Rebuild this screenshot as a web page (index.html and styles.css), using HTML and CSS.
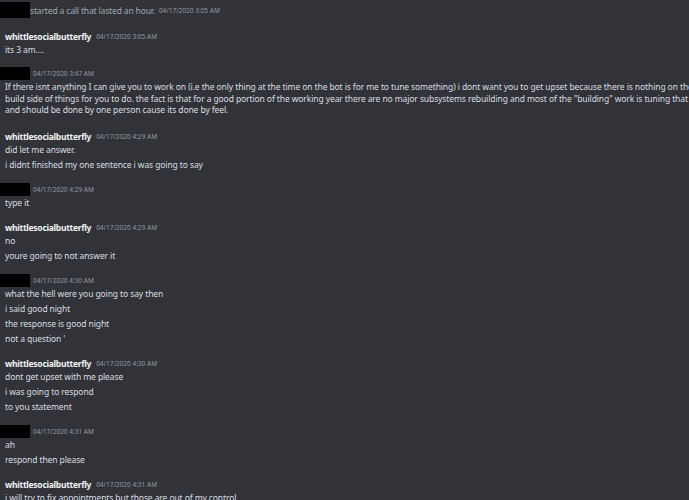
FILE: index.html
```html
<!DOCTYPE html>
<html>
<head>
<meta charset="utf-8">
<link rel="stylesheet" href="styles.css">
</head>
<body>
<div class="chat">
  <div class="system">
    <span class="redact redact-tall"></span>
    <span class="sys-text">started a call that lasted an hour.</span>
    <span class="time">04/17/2020 3:05 AM</span>
  </div>

  <div class="group group-first">
    <div class="head"><span class="user">whittlesocialbutterfly</span><span class="time">04/17/2020 3:05 AM</span></div>
    <div class="msg">its 3 am....</div>
  </div>

  <div class="group group-tight">
    <div class="head"><span class="redact"></span><span class="time">04/17/2020 3:47 AM</span></div>
    <div class="msg">
      <div class="line">If there isnt anything I can give you to work on (i.e the only thing at the time on the bot is for me to tune something) i dont want you to get upset because there is nothing on the</div>
      <div class="line">build side of things for you to do. the fact is that for a good portion of the working year there are no major subsystems rebuilding and most of the "building" work is tuning that</div>
      <div class="line">and should be done by one person cause its done by feel.</div>
    </div>
  </div>

  <div class="group group-wide">
    <div class="head"><span class="user">whittlesocialbutterfly</span><span class="time">04/17/2020 4:29 AM</span></div>
    <div class="msg">did let me answer.</div>
    <div class="msg">i didnt finished my one sentence i was going to say</div>
  </div>

  <div class="group">
    <div class="head"><span class="redact"></span><span class="time">04/17/2020 4:29 AM</span></div>
    <div class="msg">type it</div>
  </div>

  <div class="group">
    <div class="head"><span class="user">whittlesocialbutterfly</span><span class="time">04/17/2020 4:29 AM</span></div>
    <div class="msg">no</div>
    <div class="msg">youre going to not answer it</div>
  </div>

  <div class="group">
    <div class="head"><span class="redact"></span><span class="time">04/17/2020 4:30 AM</span></div>
    <div class="msg">what the hell were you going to say then</div>
    <div class="msg">i said good night</div>
    <div class="msg">the response is good night</div>
    <div class="msg">not a question '</div>
  </div>

  <div class="group">
    <div class="head"><span class="user">whittlesocialbutterfly</span><span class="time">04/17/2020 4:30 AM</span></div>
    <div class="msg">dont get upset with me please</div>
    <div class="msg">i was going to respond</div>
    <div class="msg">to you statement</div>
  </div>

  <div class="group">
    <div class="head"><span class="redact"></span><span class="time">04/17/2020 4:31 AM</span></div>
    <div class="msg">ah</div>
    <div class="msg">respond then please</div>
  </div>

  <div class="group">
    <div class="head"><span class="user">whittlesocialbutterfly</span><span class="time">04/17/2020 4:31 AM</span></div>
    <div class="msg">i will try to fix appointments but those are out of my control</div>
  </div>
</div>
</body>
</html>
```

FILE: styles.css
```css
html, body {
  margin: 0;
  padding: 0;
  background: #313338;
  overflow: hidden;
  height: 500px;
}

.chat {
  font-family: "Noto Sans", "Open Sans", sans-serif;
  font-size: 8.5px;
  line-height: 11px;
  letter-spacing: -0.1px;
  color: #dbdee1;
  width: 1200px;
}

.system {
  display: flex;
  align-items: center;
  height: 19px;
  color: #a3a8b0;
}

.sys-text {
  letter-spacing: -0.15px;
  padding-top: 1px;
}

.time {
  font-size: 6.5px;
  letter-spacing: 0;
  color: #949ba4;
  margin-left: 5px;
}

.sys-text + .time {
  margin-left: 4px;
  padding-top: 1px;
}

.redact {
  display: inline-block;
  flex: none;
  width: 30px;
  height: 13px;
  background: #000;
}

.redact-tall {
  height: 16px;
}

.group {
  margin-top: 12px;
}

.group-first {
  margin-top: 12px;
}

.group-tight {
  margin-top: 11px;
}

.group-wide {
  margin-top: 13.5px;
}

.head {
  display: flex;
  align-items: center;
  height: 11px;
  padding-left: 5px;
}

.head .redact {
  margin-left: -5px;
}

.head .redact + .time {
  margin-left: 3px;
}

.user {
  font-weight: 700;
  letter-spacing: -0.28px;
  color: #f2f3f5;
}

.msg {
  padding: 2px 0 2px 5px;
  white-space: nowrap;
}

.line {
  line-height: 11.5px;
}
```
